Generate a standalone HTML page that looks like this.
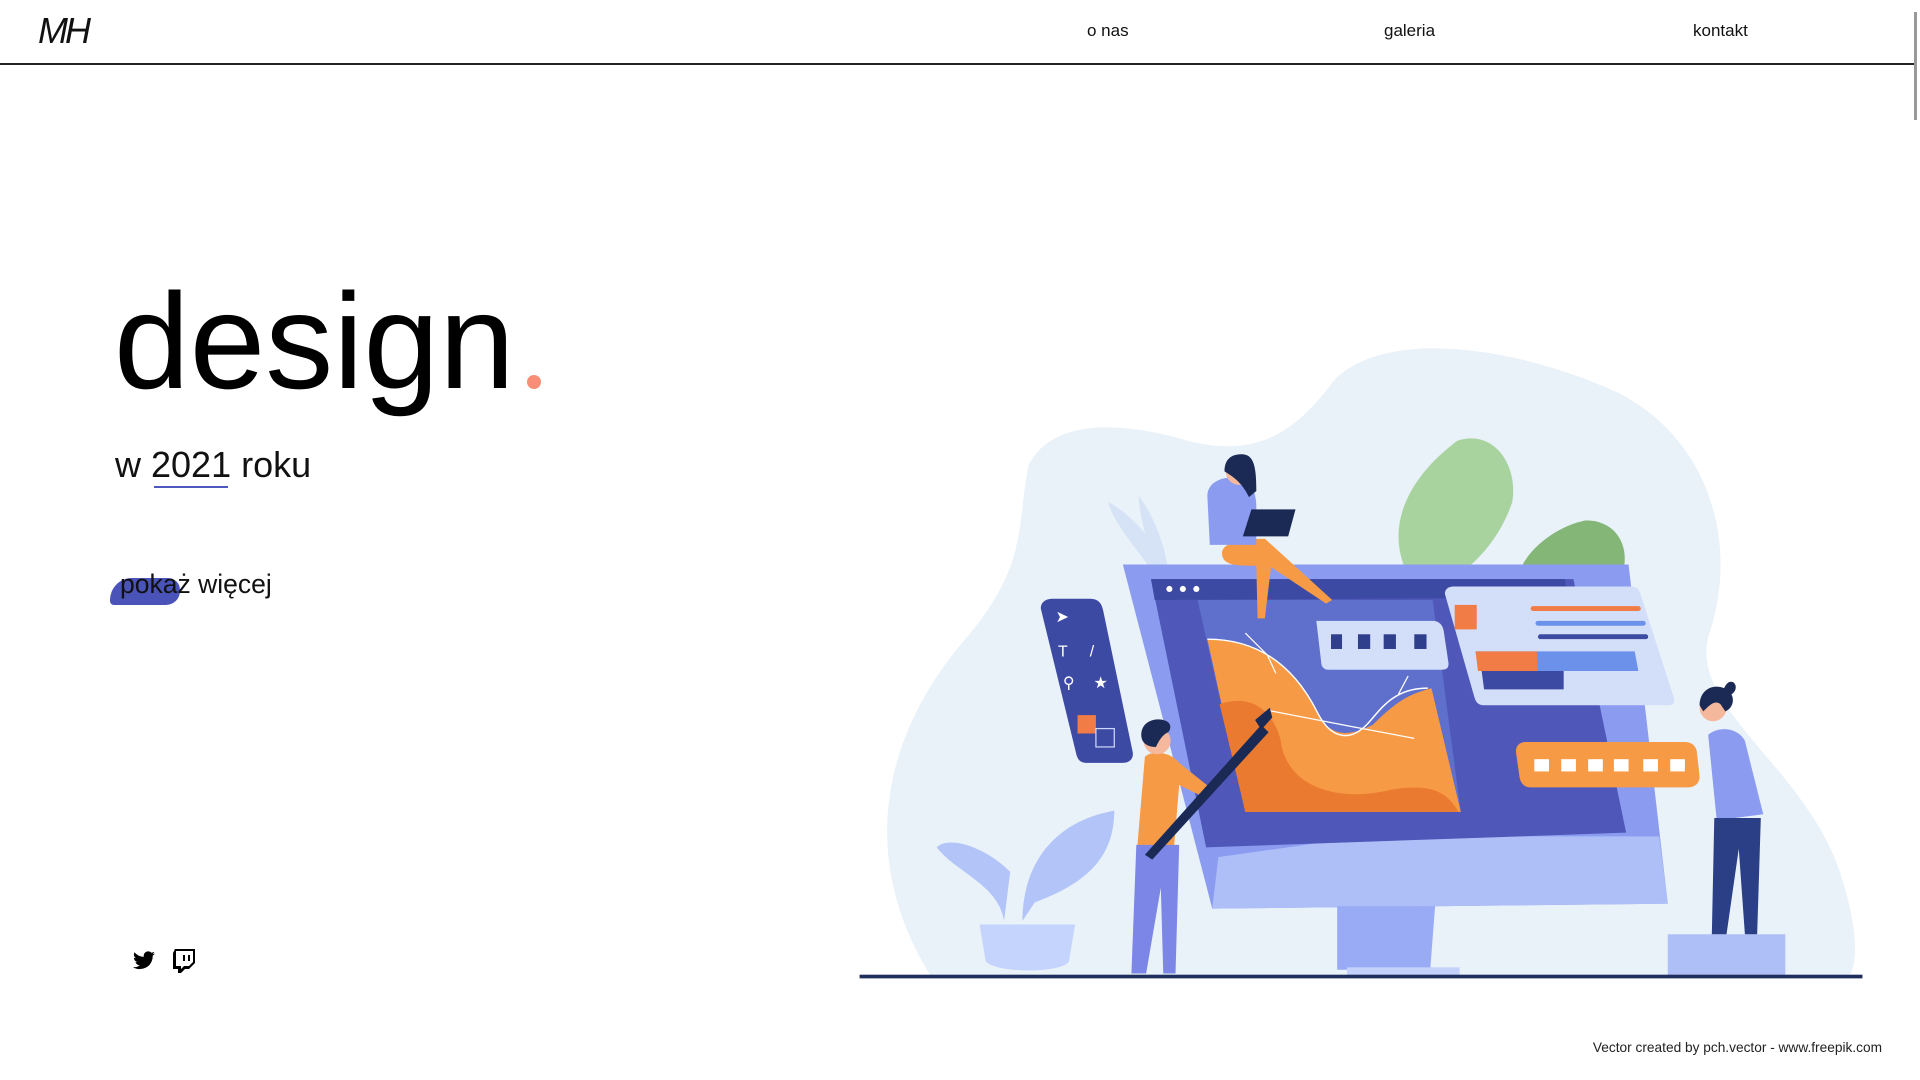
<!DOCTYPE html>
<html><head><meta charset="utf-8"><style>
html,body{margin:0;padding:0;background:#fff;width:1920px;height:1080px;overflow:hidden;font-family:"Liberation Sans",sans-serif;color:#111}
.a{position:absolute;white-space:nowrap}
</style></head><body>
<div class="a" style="left:0;top:63px;width:1916px;height:2px;background:#222"></div>
<div class="a" style="left:1914px;top:12px;width:3px;height:108px;background:#999"></div>
<div class="a" style="left:38px;top:10px;font-size:36px;font-style:italic;font-weight:300;letter-spacing:-3px;color:#111">MH</div>
<div class="a" style="left:1087px;top:21px;font-size:17px">o nas</div>
<div class="a" style="left:1384px;top:21px;font-size:17px">galeria</div>
<div class="a" style="left:1693px;top:21px;font-size:17px">kontakt</div>

<div class="a" style="left:114px;top:273px;font-size:136px;line-height:1;color:#000">design</div>
<div class="a" style="left:527px;top:375px;width:14px;height:14px;border-radius:50%;background:#f98e78"></div>

<div class="a" style="left:115px;top:447px;font-size:36px;line-height:1">w 2021 roku</div>
<div class="a" style="left:154px;top:486px;width:74px;height:2px;background:#4f57c0"></div>

<div class="a" style="left:110px;top:578px;width:70px;height:27px;background:#4a53b8;border-radius:22px 12px 14px 4px"></div>
<div class="a" style="left:120px;top:571px;font-size:26.5px;line-height:1">pokaż więcej</div>

<svg class="a" style="left:132px;top:950px" width="24" height="22" viewBox="0 0 24 20"><path d="M23 2.5c-.8.4-1.7.6-2.6.7.9-.6 1.6-1.4 2-2.5-.9.5-1.9.9-2.9 1.1A4.5 4.5 0 0 0 11.8 5.9 12.8 12.8 0 0 1 2.5 1.2a4.5 4.5 0 0 0 1.4 6 4.4 4.4 0 0 1-2-.6c0 2.2 1.5 4 3.6 4.4-.7.2-1.4.2-2 .1.6 1.8 2.2 3.1 4.2 3.1A9 9 0 0 1 1 16.1 12.8 12.8 0 0 0 20.7 5.3v-.6c.9-.6 1.7-1.4 2.3-2.2z" fill="#000"/></svg>
<svg class="a" style="left:173px;top:949px" width="22" height="24" viewBox="0 0 22 24"><path d="M2 0 0 4v16h5v4h3l4-4h4l6-6V0z" fill="#000"/><path d="M3 2h17v11l-4 4h-5l-3 3v-3H3z" fill="#fff"/><rect x="10" y="6" width="2" height="6" fill="#000"/><rect x="15" y="6" width="2" height="6" fill="#000"/></svg>

<div class="a" style="right:38px;top:1040px;font-size:13.7px;color:#222">Vector created by pch.vector - www.freepik.com</div>

<svg class="a" style="left:0;top:0" width="1920" height="1080" viewBox="0 0 1568 882">
<path d="M760 797C700 700 720 600 790 520 840 460 830 430 840 380 860 340 920 345 970 360 1030 375 1060 350 1090 310 1130 270 1230 280 1320 320 1400 360 1420 450 1395 520 1380 580 1480 630 1505 720 1520 770 1515 790 1510 797Z" fill="#e9f1f9"/>
<path d="M905 410c20 10 45 40 55 65l-10 5c-15-25-40-50-45-70z" fill="#d6e3f6"/>
<path d="M930 405c15 20 25 50 25 75h-8c-5-25-17-55-17-75z" fill="#d6e3f6"/>
<path d="M1150 470c-20-40 0-80 40-110 30-10 50 20 45 50-10 30-30 50-45 60z" fill="#a8d39e"/>
<path d="M1240 470c5-20 30-40 55-45 30 0 40 30 25 55l-20 10z" fill="#84b677"/>
<polygon points="917,461 1330,461 1362,738 990,742" fill="#8b9cf0"/>
<polygon points="995,700 1115,683 1355,683 1362,738 990,742" fill="#aebff7"/>
<polygon points="940,473 1285,473 1328,680 985,692" fill="#4f58b9"/>
<polygon points="940,473 1278,473 1280,488 943,490" fill="#3d4aa3"/>
<circle cx="955" cy="481" r="2.5" fill="#fff"/><circle cx="966" cy="481" r="2.5" fill="#fff"/><circle cx="977" cy="481" r="2.5" fill="#fff"/>
<polygon points="978,490 1170,490 1193,663 1017,663" fill="#5f6fcc"/>
<path d="M986 522c40 0 70 20 90 60 10 20 25 20 45 10 20-20 30-25 48-30l24 101H1017z" fill="#f79a45"/>
<path d="M996 575c30-10 45 10 50 30 5 40 50 50 90 40 30-5 45 0 55 18H1017z" fill="#ea7a2f"/>
<path d="M986 522c40 0 70 20 90 60 10 20 25 25 40 10 10-10 20-30 50-30" fill="none" stroke="#fff" stroke-width="1.2"/>
<path d="M1017 517 1035 535 1042 550M1035 580 1102 593 1155 603M1142 567 1150 552" stroke="#fff" stroke-width="1" fill="none"/>
<polygon points="1092,740 1172,740 1168,792 1092,792" fill="#9aabf5"/>
<rect x="1100" y="790" width="92" height="7" fill="#c3d1fb"/>
<path d="M850 497c0-6 5-8 10-8h30c8 0 10 5 11 10l24 115c1 5-2 9-8 9h-30c-5 0-7-3-8-7z" fill="#3d4aa3"/>
<rect x="880" y="584" width="15" height="15" fill="#f27c45"/>
<rect x="895" y="595" width="15" height="15" fill="none" stroke="#cdd7fb"/>
<g fill="#fff" font-size="13" font-family="Liberation Sans"><text x="862" y="508">➤</text><text x="864" y="536">T</text><text x="890" y="536">/</text><text x="868" y="562">⚲</text><text x="893" y="562">★</text></g>
<path d="M1075 507h95c5 0 8 3 9 8l4 27c0 4-2 5-6 5h-92c-4 0-6-3-6-6z" fill="#d3def9"/>
<g fill="#2f3f8c"><rect x="1087" y="518" width="9" height="12"/><rect x="1109" y="518" width="10" height="12"/><rect x="1130" y="518" width="10" height="12"/><rect x="1155" y="518" width="10" height="12"/></g>
<path d="M1180 485c0-4 3-6 7-6h145c5 0 7 3 8 7l27 84c1 4-1 6-5 6h-150c-5 0-7-3-8-7z" fill="#d3def9"/>
<rect x="1188" y="494" width="18" height="20" fill="#f27c45"/>
<rect x="1250" y="495" width="90" height="4" rx="2" fill="#f27c45"/>
<rect x="1254" y="507" width="90" height="4" rx="2" fill="#6b91ea"/>
<rect x="1256" y="518" width="90" height="4" rx="2" fill="#3d4aa3"/>
<polygon points="1205,532 1335,532 1338,548 1208,548" fill="#6b91ea"/>
<polygon points="1205,532 1255,532 1256,548 1207,548" fill="#f27c45"/>
<polygon points="1210,548 1277,548 1277,563 1212,563" fill="#3d4aa3"/>
<path d="M1238 614c0-5 3-8 8-8h130c6 0 10 4 10 10l2 18c0 6-4 9-10 9h-128c-5 0-8-3-9-8z" fill="#f79a45"/>
<g fill="#fff"><rect x="1253" y="620" width="12" height="10"/><rect x="1275" y="620" width="12" height="10"/><rect x="1297" y="620" width="12" height="10"/><rect x="1318" y="620" width="12" height="10"/><rect x="1342" y="620" width="12" height="10"/><rect x="1364" y="620" width="12" height="10"/></g>
<path d="M800 755h78l-5 30c-5 10-60 10-68 0z" fill="#c4d4fc"/>
<path d="M820 752c-5-30-40-40-55-60 10-10 40 0 60 20z M835 752c0-40 20-80 75-90 0 40-25 60-65 75z" fill="#b3c5f8"/>
<path d="M998 452c0-10 20-12 35-12l55 50-5 3-45-30-5 42h-6l-1-43c-15 0-28 0-28-10z" fill="#f79a45"/>
<path d="M986 405c0-10 10-15 20-15 15 0 20 10 20 25v30h-38z" fill="#8b9cf0"/>
<circle cx="1012" cy="385" r="11" fill="#f5b89c"/>
<path d="M1000 385c0-12 8-14 14-14 10 0 12 10 12 30l-6 5c-5-10-10-15-20-21z" fill="#1b2a55"/>
<polygon points="1022,416 1058,416 1052,438 1015,438" fill="#1b2a55"/>
<path d="M935 618c5-5 20-5 28 5l25 20-5 8-20-10-5 60h-30z" fill="#f79a45"/>
<path d="M928 690h35l-3 105h-10l-2-70-12 70h-12z" fill="#7b86e6"/>
<circle cx="945" cy="605" r="11" fill="#f5b89c"/>
<path d="M932 600c0-10 10-14 18-12 8 2 6 8 4 10-5 2-8 8-10 12-8 0-12-4-12-10z" fill="#1b2a55"/>
<path d="M935 698 1030 592l6 6-95 104z" fill="#1b2a55"/>
<path d="M1025 588l12-10 2 8-9 10z" fill="#1b2a55"/>
<rect x="1362" y="763" width="96" height="34" fill="#aebff7"/>
<path d="M1395 600c10-8 25-5 30 5l15 60-38 5z" fill="#8b9cf0"/>
<path d="M1400 668h38l-3 95h-10l-5-70-10 70h-12z" fill="#2a3f86"/>
<circle cx="1399" cy="578" r="11" fill="#f5b89c"/>
<path d="M1388 576c0-12 10-18 20-14 2-4 4-6 7-5 4 2 3 8-1 10 3 6 0 12-5 14l-4-6c-5-4-10 2-14 6z" fill="#1b2a55"/>
<rect x="702" y="796" width="819" height="3" fill="#1f2e5c"/>
</svg>
</body></html>
